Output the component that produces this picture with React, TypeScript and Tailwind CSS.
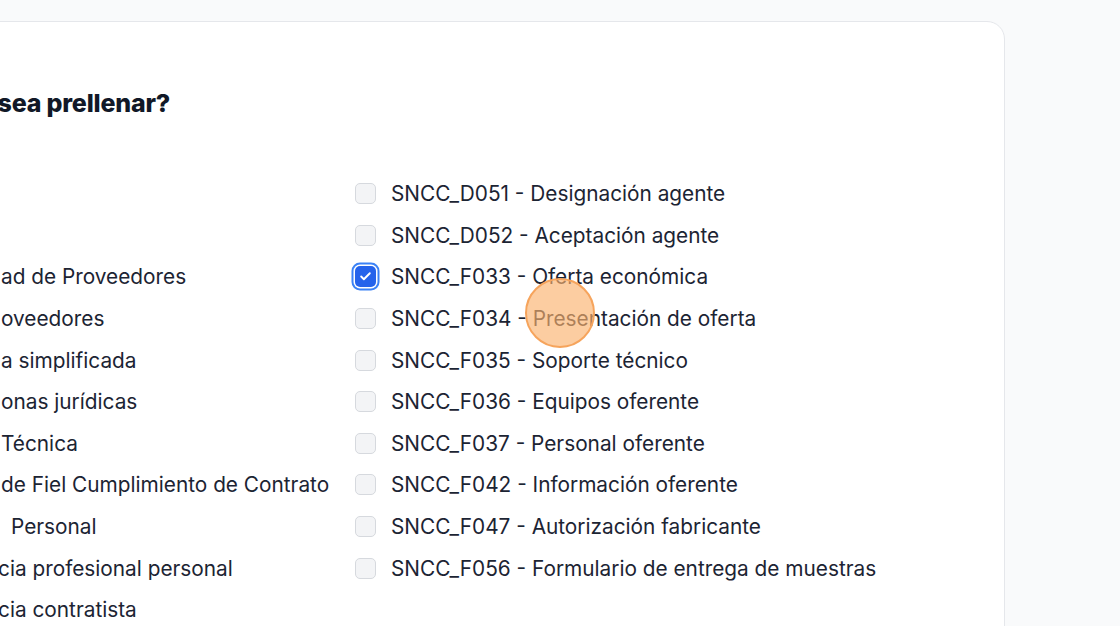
import { Check } from "lucide-react";

const leftItems: { text: string; indent?: string }[] = [
  { text: "" },
  { text: "" },
  { text: "ad de Proveedores" },
  { text: "oveedores" },
  { text: "a simplificada" },
  { text: "onas jurídicas" },
  { text: "Técnica" },
  { text: "de Fiel Cumplimiento de Contrato" },
  { text: "Personal", indent: "pl-[10px]" },
  { text: "cia profesional personal", indent: "-ml-[3px]" },
  { text: "cia contratista", indent: "-ml-[3px]" },
];

const rightItems = [
  { code: "SNCC_D051", label: "Designación agente" },
  { code: "SNCC_D052", label: "Aceptación agente" },
  { code: "SNCC_F033", label: "Oferta económica", checked: true },
  { code: "SNCC_F034", label: "Presentación de oferta" },
  { code: "SNCC_F035", label: "Soporte técnico" },
  { code: "SNCC_F036", label: "Equipos oferente" },
  { code: "SNCC_F037", label: "Personal oferente" },
  { code: "SNCC_F042", label: "Información oferente" },
  { code: "SNCC_F047", label: "Autorización fabricante" },
  { code: "SNCC_F056", label: "Formulario de entrega de muestras" },
];

function Box({ checked }: { checked?: boolean }) {
  if (checked) {
    return (
      <span className="flex h-[21px] w-[21px] shrink-0 items-center justify-center rounded-[5px] bg-[#2563eb] ring-2 ring-[#3b82f6] ring-offset-[1.5px] ring-offset-white">
        <Check className="h-[13px] w-[13px] text-white" strokeWidth={3.5} />
      </span>
    );
  }
  return (
    <span className="h-[21px] w-[21px] shrink-0 rounded-[5px] border border-[#d6d9de] bg-[#f3f4f6]" />
  );
}

export default function App() {
  return (
    <div
      className="relative flex h-[626px] w-full items-start justify-end overflow-hidden bg-[#f9fafb] pt-[21px] pr-[115px] text-[#1c2433]"
      style={{ fontFamily: "Inter, 'Noto Sans', sans-serif" }}
    >
      <div className="flex w-[1045px] shrink-0 flex-col rounded-[18px] border border-[#e5e7eb] bg-white pb-[80px] pl-[40px]">
        {/* Title */}
        <div className="relative mt-[66px] h-[30px] w-[169px] shrink-0">
          <h2 className="absolute right-0 top-0 whitespace-nowrap text-right text-[25px] font-extrabold leading-[30px] tracking-[-0.2px] text-[#111827]">
            ¿Qué formularios desea prellenar?
          </h2>
        </div>

        {/* Lists */}
        <div className="mt-[55px] flex shrink-0 text-[20.8px]">
          <div className="flex w-[351px] flex-col">
            {leftItems.map((it, i) => (
              <div key={i} className={`flex h-[41.6px] items-center whitespace-nowrap ${it.indent ?? ""}`}>
                {it.text}
              </div>
            ))}
          </div>
          <div className="flex flex-col pl-[3px]">
            {rightItems.map((it) => (
              <label key={it.code} className="flex h-[41.6px] items-center gap-[15px] whitespace-nowrap">
                <Box checked={it.checked} />
                <span>
                  {it.code} - {it.label}
                </span>
              </label>
            ))}
          </div>
        </div>
      </div>

      {/* Cursor highlight */}
      <div className="pointer-events-none absolute left-[525px] top-[278px] h-[70px] w-[70px] rounded-full border-2 border-[#f6a45c] bg-[#fbb26f]/65" />
    </div>
  );
}
